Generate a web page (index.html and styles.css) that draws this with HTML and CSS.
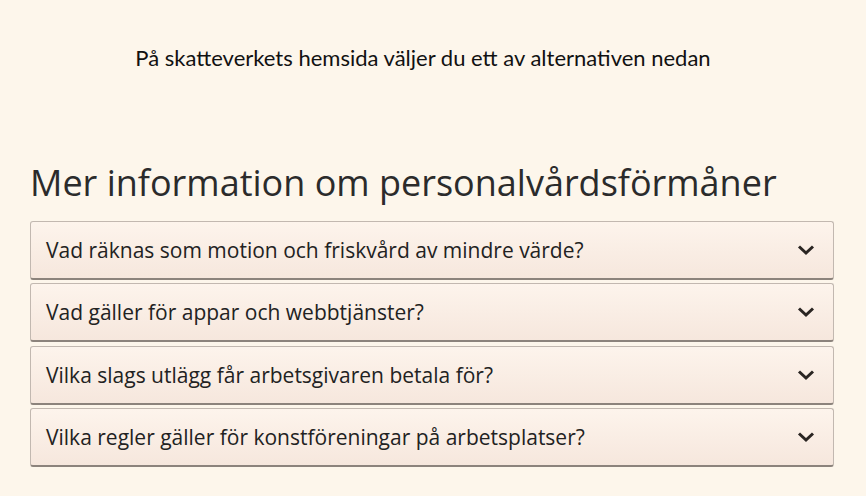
FILE: index.html
```html
<!DOCTYPE html>
<html lang="sv">
<head>
	<meta charset="UTF-8" />
	<title>Personalvårdsförmåner</title>
	<link rel="stylesheet" href="styles.css">
</head>
<body>
	<p class="intro">På skatteverkets hemsida väljer du ett av alternativen nedan</p>
	<section class="more">
		<h2>Mer information om personalvårdsförmåner</h2>
		<div class="accordion">
			<button class="acc-item"><span>Vad räknas som motion och friskvård av mindre värde?</span><svg class="chev" viewBox="0 0 18 12"><path d="M2 2.5l7 6.5 7-6.5"/></svg></button>
			<button class="acc-item"><span>Vad gäller för appar och webbtjänster?</span><svg class="chev" viewBox="0 0 18 12"><path d="M2 2.5l7 6.5 7-6.5"/></svg></button>
			<button class="acc-item"><span>Vilka slags utlägg får arbetsgivaren betala för?</span><svg class="chev" viewBox="0 0 18 12"><path d="M2 2.5l7 6.5 7-6.5"/></svg></button>
			<button class="acc-item"><span>Vilka regler gäller för konstföreningar på arbetsplatser?</span><svg class="chev" viewBox="0 0 18 12"><path d="M2 2.5l7 6.5 7-6.5"/></svg></button>
		</div>
	</section>
</body>
</html>
```

FILE: styles.css
```css
body {
	margin: 0;
	background-color: #fdf6eb;
	font-family: "Open Sans", sans-serif;
	color: #222;
}
.intro {
	margin: 0;
	padding: 44px 20px 0 0;
	text-align: center;
	font-family: Lato, sans-serif;
	font-size: 22px;
	line-height: 28px;
	color: #111;
}
.more {
	padding: 89px 32px 0 30px;
}
h2 {
	margin: 0 0 16px;
	font-weight: 400;
	font-size: 36px;
	line-height: 44px;
	color: #2b2b2b;
}
.accordion {
	display: flex;
	flex-direction: column;
	gap: 3.3px;
}
.acc-item {
	display: flex;
	align-items: center;
	justify-content: space-between;
	height: 59px;
	padding: 0 18px 0 15px;
	box-sizing: border-box;
	border: 1px solid #c2b8b0;
	border-bottom: 2px solid #8c837c;
	border-radius: 3px;
	background: linear-gradient(#fdf4ec, #f6e7dd);
	font-family: "Open Sans", sans-serif;
	font-size: 21px;
	color: #222;
	text-align: left;
}
.chev {
	width: 18px;
	height: 12px;
	fill: none;
	stroke: #2a2522;
	stroke-width: 3;
}
```
